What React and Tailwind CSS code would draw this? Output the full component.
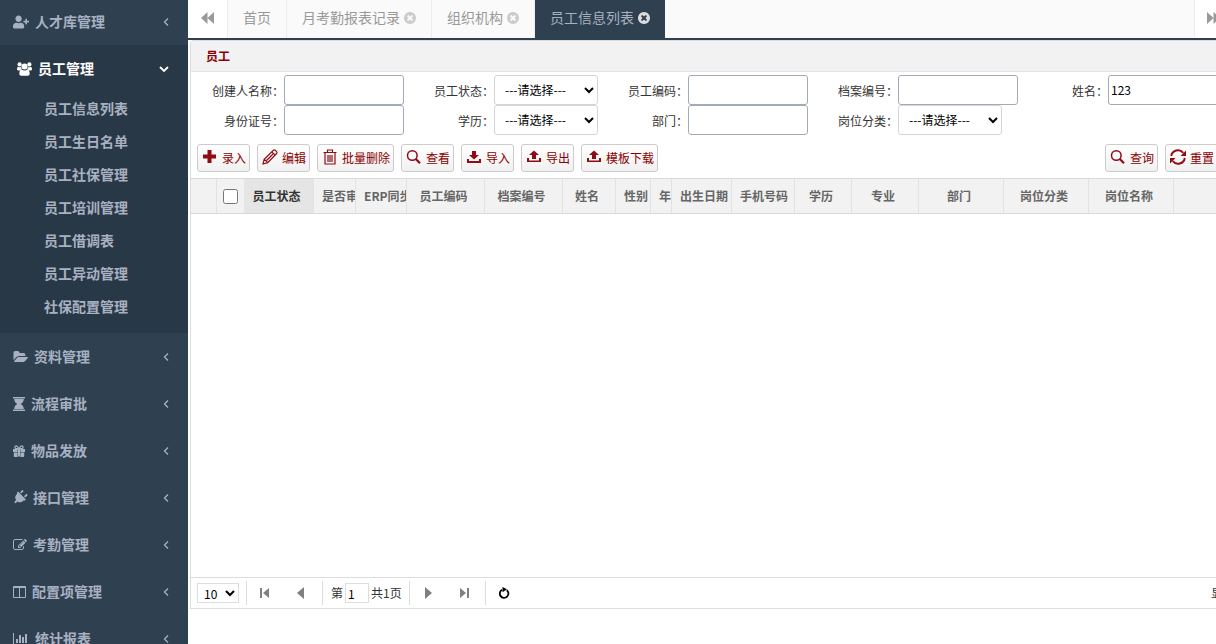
import React, { useState } from "react";
import { FaUserPlus, FaPlug } from "react-icons/fa";

function Glyph({ box, className, children }) {
  return (
    <svg viewBox={box} className={`shrink-0 ${className}`} fill="currentColor" aria-hidden="true">
      {children}
    </svg>
  );
}

function UsersIcon() {
  return (
    <Glyph box="0 0 15 14" className="h-[14px] w-[15px]">
      <circle cx="2.6" cy="2.4" r="2.1" />
      <circle cx="12.4" cy="2.4" r="2.1" />
      <circle cx="7.5" cy="4.6" r="3" />
      <path d="M0 7.200C0 5.600.6 4.700 1.300 4.700c.8.600 2 .7 2.800.3 0 1 .3 1.900.9 2.500-1 0-1.700.4-2.200.9H1.200C.4 8.400 0 8 0 7.200zM15 7.200c0-1.600-.6-2.500-1.300-2.500-.8.600-2 .7-2.800.3 0 1-.3 1.900-.9 2.500 1 0 1.700.4 2.200.9h1.600c.8 0 1.200-.4 1.200-1.200z" />
      <path d="M4.600 7.600c1.700 1.200 4.100 1.200 5.800 0 1.600.2 2.300 2 2.300 4.200 0 1.200-.8 1.900-1.900 1.900H4.200c-1.100 0-1.900-.7-1.900-1.900 0-2.200.7-4 2.300-4.200z" />
    </Glyph>
  );
}

function FolderIcon() {
  return (
    <Glyph box="0 128 1943 1536" className="h-[12px] w-[15px]">
      <path d="M1943 952q0 31-31 66l-336 396q-43 51-120.500 86.500t-143.500 35.500h-1088q-34 0-60.500-13t-26.500-43q0-31 31-66l336-396q43-51 120.500-86.500t143.500-35.500h1088q34 0 60.500 13t26.500 43zm-343-344v160h-832q-94 0-197 47.500t-164 119.500l-337 396-5 6q0-4-.5-12.500t-.5-12.500v-960q0-92 66-158t158-66h320q92 0 158 66t66 158v32h544q92 0 158 66t66 158z" />
    </Glyph>
  );
}

function HourglassIcon() {
  return (
    <Glyph box="0 0 12 14" className="h-[14px] w-[12px]">
      <path d="M0 0h12v1.600H0zM0 12.400h12V14H0zM1.200 2h9.600c0 2.300-1.200 4-3 5 1.800 1 3 2.700 3 5H1.200c0-2.300 1.200-4 3-5-1.800-1-3-2.700-3-5z" />
    </Glyph>
  );
}

function GiftIcon() {
  return (
    <Glyph box="0 0 12 12" className="h-[12px] w-[12px]">
      <path d="M0 4h4.600v3H0zM7.400 4H12v3H7.400zM5 4h2v7.500H5zM.8 7.500h3.800V12H1.600a.8.8 0 0 1-.8-.8zM7.400 7.500h3.800v3.700a.8.8 0 0 1-.8.8h-3z" />
      <path
        d="M6 4C5 2 4.200.9 3.300.9a1.400 1.400 0 0 0 0 2.800H6zM6 4C7 2 7.800.9 8.700.9a1.400 1.400 0 0 1 0 2.800H6z"
        fill="none"
        stroke="currentColor"
        strokeWidth="1.200"
      />
    </Glyph>
  );
}

function EditIcon() {
  return (
    <Glyph box="0 128 1792 1536" className="h-[12px] w-[14px]">
      <path d="M888 1184l116-116-152-152-116 116v56h96v96h56zm440-720q-16-16-33 1l-350 350q-17 17-1 33t33-1l350-350q17-17 1-33zm80 594v190q0 119-84.500 203.500t-203.500 84.500h-832q-119 0-203.500-84.500t-84.500-203.500v-832q0-119 84.500-203.500t203.500-84.500h832q63 0 117 25 15 7 18 23 3 17-9 29l-49 49q-14 14-32 8-23-6-45-6h-832q-66 0-113 47t-47 113v832q0 66 47 113t113 47h832q66 0 113-47t47-113v-126q0-13 9-22l64-64q15-15 35-7t20 29zm-96-738l288 288-672 672h-288v-288zm444 132l-92 92-288-288 92-92q28-28 68-28t68 28l152 152q28 28 28 68t-28 68z" />
    </Glyph>
  );
}

function ColumnsIcon() {
  return (
    <Glyph box="0 0 13 12" className="h-[12px] w-[13px]">
      <path d="M1 0h11a1 1 0 0 1 1 1v10a1 1 0 0 1-1 1H1a1 1 0 0 1-1-1V1a1 1 0 0 1 1-1zm0 2v9h5V2zm6 0v9h5V2z" fillRule="evenodd" />
    </Glyph>
  );
}

function ChartIcon() {
  return (
    <Glyph box="0 128 2048 1536" className="h-[12px] w-[16px]">
      <path d="M640 896v512h-256v-512h256zm384-512v1024h-256v-1024h256zm1024 1152v128h-2048v-1536h128v1408h1920zm-640-896v768h-256v-768h256zm384-384v1152h-256v-1152h256z" />
    </Glyph>
  );
}

function CloseIcon() {
  return (
    <Glyph box="128 128 1536 1536" className="h-[12px] w-[12px]">
      <path d="M1277 1122q0-26-19-45l-181-181 181-181q19-19 19-45 0-27-19-46l-90-90q-19-19-46-19-26 0-45 19l-181 181-181-181q-19-19-45-19-27 0-46 19l-90 90q-19 19-19 46 0 26 19 45l181 181-181 181q-19 19-19 45 0 27 19 46l90 90q19 19 46 19 26 0 45-19l181-181 181 181q19 19 45 19 27 0 46-19l90-90q19-19 19-46zm387-226q0 209-103 385.500t-279.500 279.500-385.500 103-385.500-103-279.500-279.500-103-385.500 103-385.500 279.500-279.500 385.500-103 385.500 103 279.500 279.500 103 385.500z" />
    </Glyph>
  );
}

function BackwardIcon({ className = "" }) {
  return (
    <Glyph box="0 0 13 12" className={`h-[12px] w-[13px] ${className}`}>
      <path d="M6.500 0v12L0 6zM13 0v12L6.500 6z" />
    </Glyph>
  );
}

function Angle({ down }) {
  return (
    <Glyph box="0 0 10 10" className="ml-auto h-[10px] w-[10px]">
      <path
        d={down ? "M1 3l4 4 4-4" : "M7 1.500L3.500 5 7 8.500"}
        fill="none"
        stroke="currentColor"
        strokeWidth={down ? 1.8 : 1.3}
      />
    </Glyph>
  );
}

const toolIcons = {
  add: <path d="M5.500 1h4v4.500H14v4H9.500V14h-4V9.500H1v-4h4.500z" />,
  edit: (
    <path
      d="M1 15l1.200-4.800L11.400 1.200q.9-.7 1.800 0l1.400 1.500q.8.900 0 1.800L5.700 13.700zM2.200 10.200l3.500 3.500M9.800 2.800l3.400 3.400M4.500 11.500l6.500-6.500"
      fill="none"
      stroke="currentColor"
      strokeWidth="1.200"
    />
  ),
  trash: (
    <path
      d="M1.500 3.500h13M5.500 3V1h5v2M3 3.500v11.500h10V3.500M6 6v7M8 6v7M10 6v7"
      fill="none"
      stroke="currentColor"
      strokeWidth="1.200"
    />
  ),
  search: (
    <>
      <circle cx="6.300" cy="6.500" r="4.800" fill="none" stroke="currentColor" strokeWidth="1.500" />
      <path d="M9.800 10l4.200 4.200" stroke="currentColor" strokeWidth="2.200" />
    </>
  ),
  download: <path d="M6 2h4v4h3L8 10.500 3 6h3zM1 10h2v2h10v-2h2v4H1z" />,
  upload: <path d="M6 10h4V6h3L8 1.500 3 6h3zM1 9h2v2.500h10V9h2v4H1z" />,
  refresh: (
    <>
      <path
        d="M1.200 7A6.800 6.800 0 0 1 13.200 3.800M14.800 9A6.800 6.800 0 0 1 2.800 12.200"
        fill="none"
        stroke="currentColor"
        strokeWidth="1.900"
      />
      <path d="M16 1.500v5.500h-5.500zM0 14.500V9h5.500z" />
    </>
  ),
};

function ToolButton({ icon, children }) {
  return (
    <button
      type="button"
      className="flex h-7 shrink-0 items-center gap-1 rounded-[3px] border border-[#ccc] bg-linear-to-b from-white to-[#f0f0f0] pr-[3px] pl-1 text-[12px] text-[#8b0000]"
    >
      <Glyph box="0 0 16 16" className="mb-[2px] h-4 w-4 text-[#900b14]">
        {toolIcons[icon]}
      </Glyph>
      {children}
    </button>
  );
}

const menus = [
  { label: "资料管理", icon: <FolderIcon /> },
  { label: "流程审批", icon: <HourglassIcon /> },
  { label: "物品发放", icon: <GiftIcon /> },
  { label: "接口管理", icon: <FaPlug className="h-[15px] w-[14px] rotate-45" /> },
  { label: "考勤管理", icon: <EditIcon /> },
  { label: "配置项管理", icon: <ColumnsIcon /> },
  { label: "统计报表", icon: <ChartIcon /> },
];

const staffMenu = [
  "员工信息列表",
  "员工生日名单",
  "员工社保管理",
  "员工培训管理",
  "员工借调表",
  "员工异动管理",
  "社保配置管理",
];

const fields = [
  { id: "creator", label: "创建人名称" },
  { id: "status", label: "员工状态", select: true },
  { id: "code", label: "员工编码" },
  { id: "archive", label: "档案编号" },
  { id: "name", label: "姓名", value: "123" },
  { id: "idcard", label: "身份证号" },
  { id: "education", label: "学历", select: true },
  { id: "dept", label: "部门" },
  { id: "post", label: "岗位分类", select: true },
];

const columns = [
  { label: "员工状态", width: "w-[70px]", sorted: true },
  { label: "是否审核", width: "w-[42px]" },
  { label: "ERP同步", width: "w-[51px]" },
  { label: "员工编码", width: "w-[78px]" },
  { label: "档案编号", width: "w-[78px]" },
  { label: "姓名", width: "w-[53px]" },
  { label: "性别", width: "w-[35px]" },
  { label: "年龄", width: "w-[21px]" },
  { label: "出生日期", width: "w-[60px]" },
  { label: "手机号码", width: "w-[63px]" },
  { label: "学历", width: "w-[57px]" },
  { label: "专业", width: "w-[67px]" },
  { label: "部门", width: "w-[85px]" },
  { label: "岗位分类", width: "w-[85px]" },
  { label: "岗位名称", width: "w-[85px]" },
];

function MenuRow({ icon, label }) {
  return (
    <a href="#" className="flex h-[47px] items-center gap-[6px] pr-[17px] pl-[13px]">
      {icon}
      <span className="pb-[2px]">{label}</span>
      <Angle />
    </a>
  );
}

function Sidebar() {
  return (
    <nav className="w-[188px] shrink-0 overflow-hidden bg-[#2f4050] text-[14px] leading-5 font-semibold text-[#a7b1c2]">
      <a href="#" className="flex h-[45px] items-center gap-[6px] pr-[17px] pb-[2px] pl-[13px]">
        <FaUserPlus className="h-[14px] w-4" />
        <span className="pb-[2px]">人才库管理</span>
        <Angle />
      </a>
      <div className="bg-[#293846] pb-[10px]">
        <a href="#" className="flex h-[47px] items-center gap-[6px] pr-[19px] pl-[17px] text-white">
          <UsersIcon />
          <span className="pb-[2px]">员工管理</span>
          <Angle down />
        </a>
        <ul>
          {staffMenu.map((item) => (
            <li key={item}>
              <a href="#" className="flex h-[33px] items-center pb-[2px] pl-11">
                {item}
              </a>
            </li>
          ))}
        </ul>
      </div>
      {menus.map((menu) => (
        <MenuRow key={menu.label} {...menu} />
      ))}
    </nav>
  );
}

function Tab({ label, closable, active }) {
  return (
    <a
      href="#"
      className={`flex items-center gap-1 px-[15px] pb-[2px] ${
        active ? "bg-[#2f4050] text-[#a7b1c2]" : "border-r border-[#eee] text-[#999]"
      }`}
    >
      <span className="pb-[2px]">{label}</span>
      {closable ? (
        <span className={active ? "text-[#ddd]" : "text-[#ccc]"}>
          <CloseIcon />
        </span>
      ) : null}
    </a>
  );
}

function SearchField({ id, label, select, value = "" }) {
  const [current, setCurrent] = useState(value);

  return (
    <>
      <label htmlFor={id} className="self-center pt-[2px] text-right text-[12px] text-[#333]">
        {label}：
      </label>
      {select ? (
        <select
          id={id}
          className="h-[30px] w-[104px] rounded-[3px] border border-[#d5d5d5] bg-white pb-[2px] pl-[6px] text-[12px] text-black"
        >
          <option>---请选择---</option>
        </select>
      ) : (
        <input
          id={id}
          type="text"
          value={current}
          onChange={(event) => setCurrent(event.target.value)}
          className="h-[30px] w-[120px] rounded-[3px] border border-[#a2abb5] bg-white px-[2px] pb-[2px] text-[12px] text-black"
        />
      )}
    </>
  );
}

function PagerButton({ label, path }) {
  return (
    <button type="button" aria-label={label} className="flex h-6 w-9 items-center justify-center text-[#808080]">
      <Glyph box="0 0 12 12" className="h-3 w-3">
        <path d={path} />
      </Glyph>
    </button>
  );
}

function Pager() {
  return (
    <div className="flex h-8 items-center border-y border-[#ddd] pl-[6px] text-[12px] text-[#333]">
      <select aria-label="每页条数" className="h-5 w-[42px] border border-[#ddd] bg-white pb-[2px] pl-[2px] text-black">
        <option>10</option>
      </select>
      <div className="ml-[7px] flex border-l border-[#ddd] pr-[3px]">
        <PagerButton label="首页" path="M1 1h2v10H1zM10 1v10L4 6z" />
        <PagerButton label="上一页" path="M9 0v12L2 6z" />
      </div>
      <div className="flex h-6 items-center gap-[2px] border-x border-[#ddd] pr-[7px] pl-2">
        <label htmlFor="page">第</label>
        <input id="page" type="text" defaultValue="1" className="h-5 w-6 border border-[#ddd] px-[2px] text-black" />
        <span>共1页</span>
      </div>
      <div className="flex border-r border-[#ddd] pr-[3px]">
        <PagerButton label="下一页" path="M3 0v12l7-6z" />
        <PagerButton label="末页" path="M2 1v10l6-5zM9 1h2v10H9z" />
      </div>
      <button type="button" aria-label="刷新" className="flex h-6 w-9 items-center justify-center text-black">
        <Glyph box="0 0 12 12" className="h-3 w-3">
          <path d="M4 2.800a4.300 4.300 0 1 0 4.800.4" fill="none" stroke="currentColor" strokeWidth="1.800" />
          <path d="M4.500 0l4.500 2.200-4.500 3z" />
        </Glyph>
      </button>
      <span className="ml-auto whitespace-nowrap">显示</span>
    </div>
  );
}

export default function App() {
  return (
    <div className="flex h-screen overflow-hidden bg-white font-['Noto_Sans_CJK_SC',sans-serif] leading-4">
      <Sidebar />

      <main className="flex min-w-[1047px] flex-1 flex-col">
        <header className="flex h-10 shrink-0 border-b-2 border-[#2f4050] bg-[#fafafa] text-[14px] leading-5">
          <button
            type="button"
            aria-label="向左"
            className="flex w-10 items-center justify-center border-r border-[#eee] bg-white pb-[2px] text-[#999]"
          >
            <BackwardIcon />
          </button>
          <Tab label="首页" />
          <Tab label="月考勤报表记录" closable />
          <Tab label="组织机构" closable />
          <Tab label="员工信息列表" closable active />
          <button
            type="button"
            aria-label="向右"
            className="ml-auto flex w-[41px] items-center border-l border-[#eee] bg-white pb-[2px] pl-3 text-[#999]"
          >
            <BackwardIcon className="rotate-180" />
          </button>
        </header>

        <div className="flex flex-1 flex-col bg-white pb-[35px]">
          <section className="ml-[2px] flex flex-1 flex-col rounded-tl-[4px] border-t border-l border-[#ddd]">
            <h1 className="flex h-[31px] items-center border-b border-[#e5e5e5] bg-[#f2f2f2] pl-[15px] text-[12px] font-bold text-[#8b0000]">
              员工
            </h1>

            <form
              className="grid grid-cols-[93px_120px_90px_104px_90px_120px_90px_120px_90px_120px] pt-[3px]"
              onSubmit={(event) => event.preventDefault()}
            >
              {fields.map((field) => (
                <SearchField key={field.id} {...field} />
              ))}
            </form>

            <div className="flex gap-[7px] pt-[9px] pr-[17px] pb-[6px] pl-[6px]">
              <ToolButton icon="add">录入</ToolButton>
              <ToolButton icon="edit">编辑</ToolButton>
              <ToolButton icon="trash">批量删除</ToolButton>
              <ToolButton icon="search">查看</ToolButton>
              <ToolButton icon="download">导入</ToolButton>
              <ToolButton icon="upload">导出</ToolButton>
              <ToolButton icon="upload">模板下载</ToolButton>
              <div className="ml-auto flex gap-[7px]">
                <ToolButton icon="search">查询</ToolButton>
                <ToolButton icon="refresh">重置</ToolButton>
              </div>
            </div>

            <div className="flex-1">
              <table className="w-full table-fixed border-separate border-spacing-0 bg-[#f2f2f2] text-[12px] text-[#666]">
                <thead>
                  <tr className="h-9">
                    <th className="w-[26px] border-y border-r border-y-[#d9d9d9] border-r-[#e2e2e2] p-0" />
                    <th className="w-[27px] border-y border-[#d9d9d9] p-0">
                      <input type="checkbox" aria-label="全选" className="mx-auto block h-[15px] w-[15px]" />
                    </th>
                    {columns.map((column) => (
                      <th
                        key={column.label}
                        className={`overflow-hidden border-y border-r border-y-[#d9d9d9] border-r-[#e2e2e2] py-0 pr-3 pl-2 font-bold whitespace-nowrap ${
                          column.width
                        } ${column.sorted ? "bg-[#e5e5e5] text-[#333]" : ""}`}
                      >
                        {column.label}
                      </th>
                    ))}
                    <th className="border-y border-[#d9d9d9] p-0" />
                  </tr>
                </thead>
              </table>
            </div>

            <Pager />
          </section>
        </div>
      </main>
    </div>
  );
}
